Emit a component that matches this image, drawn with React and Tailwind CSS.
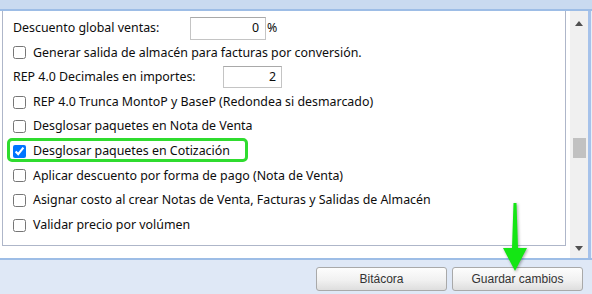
import React from "react";

function Check({ label, checked, highlight }) {
  return (
    <div className="relative flex items-center h-[24.6px] pl-[10px]">
      {highlight && (
        <span className="absolute left-[4px] top-[-0.5px] w-[241px] h-[24px] border-[3px] border-[#2fdc2f] rounded-[5px] pointer-events-none" />
      )}
      <input
        type="checkbox"
        defaultChecked={checked}
        className="m-0 w-[13px] h-[13px] shrink-0"
      />
      <span className="ml-[7px] whitespace-nowrap">{label}</span>
    </div>
  );
}

export default function App() {
  return (
    <div
      className="relative w-[592px] h-[294px] overflow-hidden flex flex-col bg-[#dfe8f6] text-[12.4px] text-[#0d0d0d]"
      style={{ fontFamily: '"Noto Sans", "Open Sans", sans-serif' }}
    >
      {/* top band */}
      <div className="h-[9px] bg-[#c9daf0] shrink-0" />
      <div className="h-[2px] bg-[#9dbde6] shrink-0" />

      {/* middle */}
      <div className="flex h-[247px] shrink-0">
        <div className="w-[570px] bg-white pl-[2px] flex flex-col">
          <div className="w-[564px] h-[235px] border-l border-r border-b border-[#aeb6c9] pt-[5px]">
            <div className="flex items-center h-[24.6px] pl-[10px]">
              <span className="w-[177px] whitespace-nowrap">Descuento global ventas:</span>
              <div className="w-[76px] h-[23px] border border-[#c4c4c4] border-t-[#a9a9a9] bg-white flex items-center justify-end pr-[6px]">
                0
              </div>
              <span className="ml-[1px]">%</span>
            </div>
            <Check label="Generar salida de almacén para facturas por conversión." />
            <div className="flex items-center h-[24.6px] pl-[10px]">
              <span className="w-[210px] whitespace-nowrap">REP 4.0 Decimales en importes:</span>
              <div className="w-[59px] h-[22px] border border-[#c4c4c4] border-t-[#a9a9a9] bg-white flex items-center justify-end pr-[5px]">
                2
              </div>
            </div>
            <Check label="REP 4.0 Trunca MontoP y BaseP (Redondea si desmarcado)" />
            <Check label="Desglosar paquetes en Nota de Venta" />
            <Check label="Desglosar paquetes en Cotización" checked highlight />
            <Check label="Aplicar descuento por forma de pago (Nota de Venta)" />
            <Check label="Asignar costo al crear Notas de Venta, Facturas y Salidas de Almacén" />
            <Check label="Validar precio por volúmen" />
          </div>
        </div>
        {/* scrollbar */}
        <div className="w-[18px] bg-[#f0f0f0] flex flex-col items-center pt-[10px]">
          <svg width="8" height="5" viewBox="0 0 8 5" className="block shrink-0">
            <polygon points="0,5 8,5 4,0" fill="#505050" />
          </svg>
          <div className="w-[13px] h-[20px] bg-[#c1c1c1] mt-[112px] shrink-0" />
          <svg width="8" height="5" viewBox="0 0 8 5" className="block mt-[88px] shrink-0">
            <polygon points="0,0 8,0 4,5" fill="#505050" />
          </svg>
        </div>
        <div className="w-[3px] bg-[#a6c2ea]" />
        <div className="w-[1px] bg-[#e8eef8]" />
      </div>

      {/* bottom */}
      <div className="h-[2px] bg-[#9dbde6] shrink-0" />
      <div
        className="flex-1 flex justify-end items-start pt-[7px] pr-[9px] gap-[5px] text-[12px] text-[#333]"
        style={{ fontFamily: '"Liberation Sans", Arial, sans-serif' }}
      >
        <button className="w-[131px] h-[24px] rounded-[3px] border border-[#a9a9a9] bg-[linear-gradient(#fdfdfd,#f1f1f1_55%,#dedede)] text-[#333]">
          Bitácora
        </button>
        <button className="w-[131px] h-[24px] rounded-[3px] border border-[#a9a9a9] bg-[linear-gradient(#fdfdfd,#f1f1f1_55%,#dedede)] text-[#333]">
          Guardar cambios
        </button>
      </div>

      {/* green arrow */}
      <svg
        className="absolute left-[500px] top-[201px]"
        width="30"
        height="72"
        viewBox="0 0 30 72"
        style={{ filter: "drop-shadow(1px 1px 1.5px rgba(0,0,0,0.35))" }}
      >
        <polygon points="13.5,2 16.5,2 18,47 27,47 15,70 3,47 12,47" fill="#14e614" />
      </svg>
    </div>
  );
}
